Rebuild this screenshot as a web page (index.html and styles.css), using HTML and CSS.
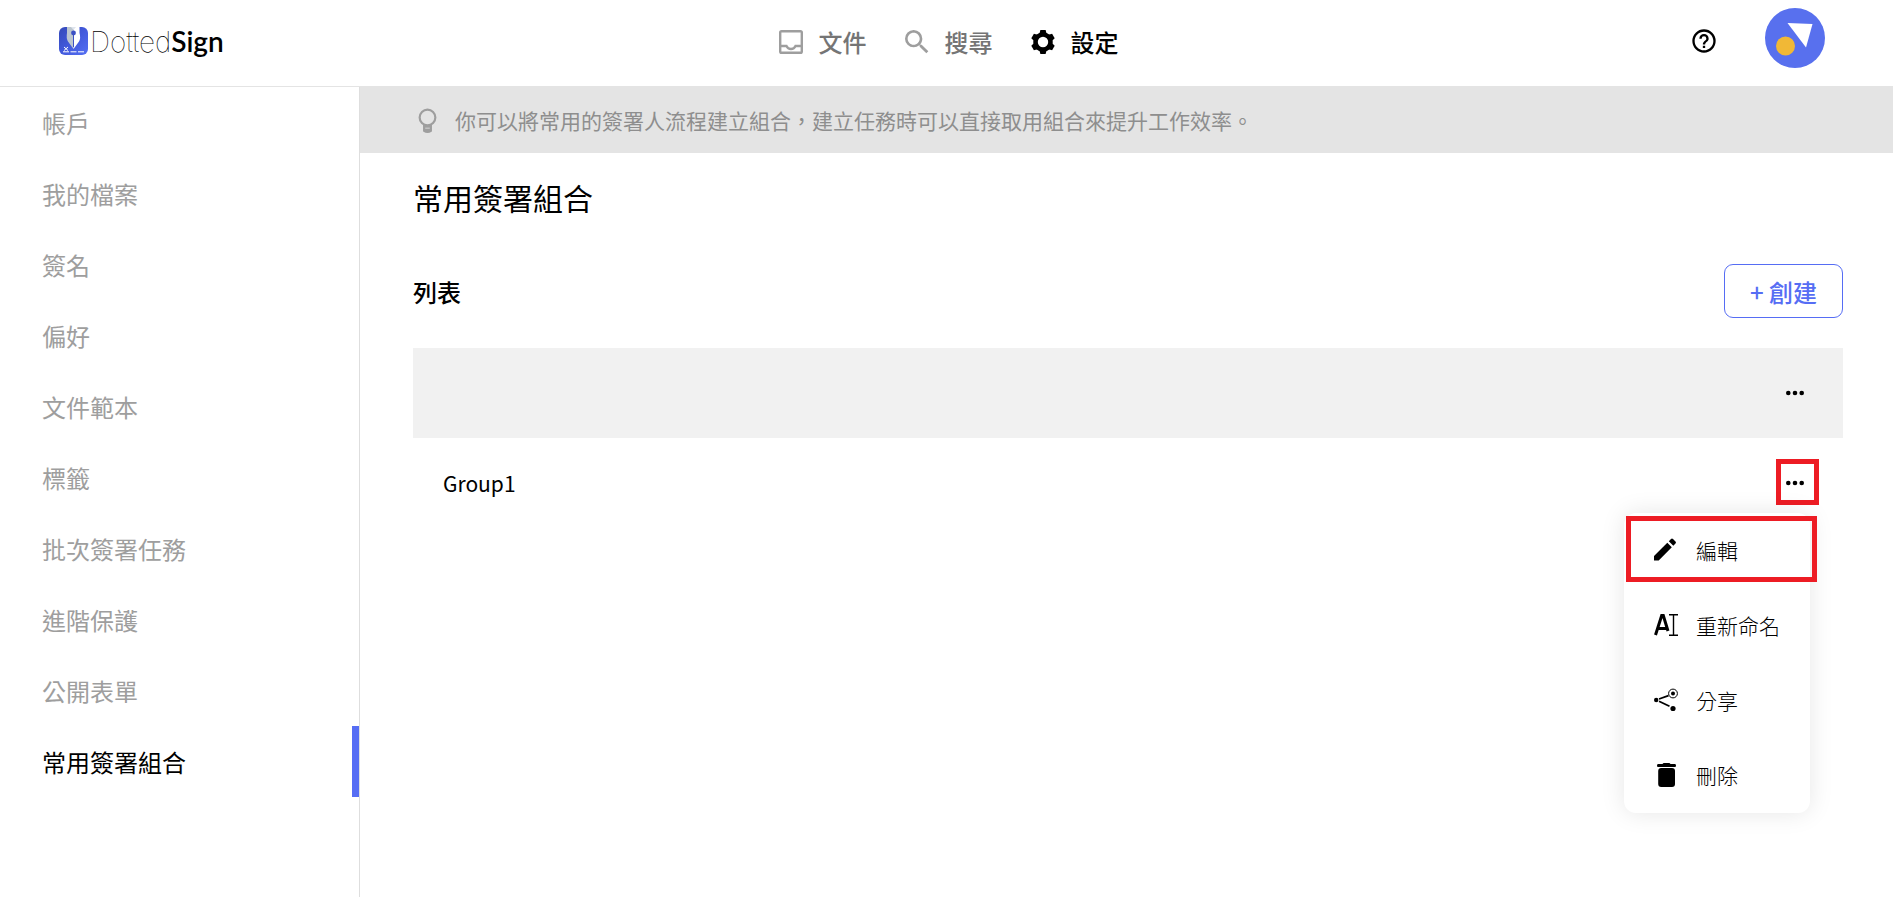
FILE: index.html
```html
<!DOCTYPE html>
<html lang="zh-Hant">
  <head>
    <meta charset="utf-8" />
    <meta name="viewport" content="width=device-width, initial-scale=1.0" />
    <title>常用簽署組合 - DottedSign</title>
    <link rel="stylesheet" href="styles.css">
  </head>
  <body>
    <header class="topbar">
      <a class="logo" href="#">
        <svg width="29" height="28" viewBox="0 0 29 28" aria-hidden="true">
          <defs>
            <linearGradient id="logo-bg" x1="0" y1="0" x2="1" y2="1">
              <stop offset="0" stop-color="#3449b8" />
              <stop offset="0.5" stop-color="#4259dc" />
              <stop offset="1" stop-color="#5570f4" />
            </linearGradient>
          </defs>
          <rect width="29" height="28" rx="6" fill="url(#logo-bg)" />
          <path d="M8 0h6.500v22L9 14.500Q7 11 8 6z" fill="#bcc6cf" />
          <path d="M14.500 22V0H20.500v6Q22 11 20 14.500z" fill="#fff" />
          <path d="M12 0h5l-2.500 3z" fill="#dfe5ee" />
          <path d="M14.500 6v14" stroke="#3b50c4" stroke-width="1" />
          <circle cx="14.500" cy="6" r="2.400" fill="#3b50c4" />
          <path d="M5 20l4 3.500M9 20l-4 3.500" stroke="#fff" stroke-width="1" />
          <path d="M4 24.800h6M11.500 24.800h6M19 24.800h6" stroke="#fff" stroke-width="1" />
        </svg>
        <span class="logo-text">Dotted<strong>Sign</strong></span>
      </a>
      <nav class="main-nav">
        <a href="#">
          <svg width="32" height="32" viewBox="0 0 24 24" fill="none" stroke="#9e9e9e" stroke-width="1.800" aria-hidden="true">
            <rect x="3.900" y="3.900" width="16.200" height="16.200" rx="1" />
            <path d="M4 15h4.600q1 2.200 3.400 2.200t3.400-2.200H20" />
          </svg>
          文件
        </a>
        <a href="#">
          <svg width="32" height="32" viewBox="0 0 24 24" fill="#9e9e9e" aria-hidden="true">
            <path d="M9.500 3A6.500 6.500 0 0 1 16 9.500c0 1.610-.590 3.090-1.560 4.230l.270.270h.790l5 5-1.500 1.500-5-5v-.790l-.270-.270A6.516 6.516 0 0 1 9.500 16a6.500 6.500 0 0 1 0-13m0 2C7 5 5 7 5 9.500S7 14 9.500 14 14 12 14 9.500 12 5 9.500 5z" />
          </svg>
          搜尋
        </a>
        <a class="active" href="#">
          <svg width="32" height="32" viewBox="-16 -16 32 32" aria-hidden="true">
            <circle r="7.500" fill="none" stroke="#000" stroke-width="4.600" />
            <path id="tooth" d="M-3.800-7.500L-2.600-12H2.600L3.800-7.500z" />
            <use href="#tooth" transform="rotate(60)" />
            <use href="#tooth" transform="rotate(120)" />
            <use href="#tooth" transform="rotate(180)" />
            <use href="#tooth" transform="rotate(240)" />
            <use href="#tooth" transform="rotate(300)" />
          </svg>
          設定
        </a>
      </nav>
      <div class="account">
        <button class="icon-button" type="button" aria-label="說明">
          <svg width="28" height="28" viewBox="0 0 24 24" aria-hidden="true">
            <path d="M11 18h2v-2h-2v2m1-16A10 10 0 0 0 2 12a10 10 0 0 0 10 10 10 10 0 0 0 10-10A10 10 0 0 0 12 2m0 18c-4.410 0-8-3.590-8-8s3.590-8 8-8 8 3.590 8 8-3.590 8-8 8m0-14a4 4 0 0 0-4 4h2a2 2 0 0 1 2-2 2 2 0 0 1 2 2c0 2-3 1.750-3 5h2c0-2.250 3-2.500 3-5a4 4 0 0 0-4-4z" />
          </svg>
        </button>
        <button class="icon-button" type="button" aria-label="個人帳戶">
          <svg width="60" height="60" viewBox="0 0 60 60" aria-hidden="true">
            <circle cx="30" cy="30" r="30" fill="#5870ee" />
            <path d="M22.500 15L47.500 16 41 39.500z" fill="#fff" />
            <circle cx="20.500" cy="38" r="9.500" fill="#f1b836" />
          </svg>
        </button>
      </div>
    </header>

    <div class="layout">
      <nav class="sidebar">
        <a href="#">帳戶</a>
        <a href="#">我的檔案</a>
        <a href="#">簽名</a>
        <a href="#">偏好</a>
        <a href="#">文件範本</a>
        <a href="#">標籤</a>
        <a href="#">批次簽署任務</a>
        <a href="#">進階保護</a>
        <a href="#">公開表單</a>
        <a class="active" href="#">常用簽署組合</a>
      </nav>

      <main>
        <p class="hint">
          <svg width="29" height="29" viewBox="0 0 24 24" fill="none" stroke="#9e9e9e" stroke-width="1.800" aria-hidden="true">
            <circle cx="12" cy="9.500" r="6.500" />
            <path d="M9.200 15v5.500q2.800 2 5.600 0V15M9 17h6M9 19.500h6" />
          </svg>
          你可以將常用的簽署人流程建立組合，建立任務時可以直接取用組合來提升工作效率。
        </p>
        <div class="content">
          <h1>常用簽署組合</h1>
          <div class="list-header">
            <h2>列表</h2>
            <button class="create" type="button">+ 創建</button>
          </div>
          <table class="groups">
            <thead>
              <tr>
                <th></th>
                <td class="actions">
                  <button class="icon-button" type="button" aria-label="更多">
                    <svg width="24" height="24" viewBox="0 0 24 24" aria-hidden="true">
                      <circle cx="5.300" cy="12" r="2.300" />
                      <circle cx="12" cy="12" r="2.300" />
                      <circle cx="18.700" cy="12" r="2.300" />
                    </svg>
                  </button>
                </td>
              </tr>
            </thead>
            <tbody>
              <tr>
                <td>Group1</td>
                <td class="actions">
                  <button class="icon-button marked" type="button" aria-label="更多">
                    <svg width="24" height="24" viewBox="0 0 24 24" aria-hidden="true">
                      <circle cx="5.300" cy="12" r="2.300" />
                      <circle cx="12" cy="12" r="2.300" />
                      <circle cx="18.700" cy="12" r="2.300" />
                    </svg>
                  </button>
                  <div class="menu">
                    <button class="marked" type="button">
                      <svg width="24" height="24" viewBox="0 0 24 24" aria-hidden="true">
                        <path d="M0 18L13.300 4.700l4.500 4.500L4.700 22.400H0zM14.800 3.200L17 1q1-1 2 0l2.500 2.500q1 1 0 2l-2.200 2.200z" />
                      </svg>
                      編輯
                    </button>
                    <button type="button">
                      <svg width="24" height="24" viewBox="0 0 24 24" aria-hidden="true">
                        <path d="M1.500 22L7.700 2.500h1.600L14 18M4 15.500h8.500" fill="none" stroke="#000" stroke-width="3" />
                        <path d="M15 1.700h9M15 22.300h9M19.500 2v20" fill="none" stroke="#000" stroke-width="1.400" />
                      </svg>
                      重新命名
                    </button>
                    <button type="button">
                      <svg width="24" height="24" viewBox="0 0 24 24" aria-hidden="true">
                        <circle cx="2.200" cy="12" r="2.200" />
                        <circle cx="19" cy="5.500" r="2" />
                        <circle cx="19" cy="5.500" r="4.400" fill="none" stroke="#000" stroke-width="1" />
                        <circle cx="19" cy="20.500" r="2.600" />
                        <path d="M5 11l9.500-3.400M5 13.300l10.500 5" fill="none" stroke="#000" stroke-width="1.800" />
                      </svg>
                      分享
                    </button>
                    <button type="button">
                      <svg width="24" height="24" viewBox="0 0 24 24" aria-hidden="true">
                        <path d="M4 1h4.500q.5-1 1.500-1h5q1 0 1.500 1H21q1 0 1 1.500T21 4H4Q3 4 3 2.500T4 1z" />
                        <rect x="4.200" y="5" width="16.800" height="19" rx="3" />
                      </svg>
                      刪除
                    </button>
                  </div>
                </td>
              </tr>
            </tbody>
          </table>
        </div>
      </main>
    </div>
  </body>
</html>
```
FILE: styles.css
```css
* {
  box-sizing: border-box;
}
body {
  display: flex;
  flex-direction: column;
  min-height: 100vh;
  margin: 0;
  background: #fff;
  color: #000;
  font-family: "Noto Sans CJK TC", "Noto Sans", sans-serif;
  font-size: 21px;
}
a {
  color: inherit;
  text-decoration: none;
}
h1,
h2,
p {
  margin: 0;
}
button {
  font: inherit;
  color: inherit;
  background: none;
  border: 0;
  padding: 0;
  cursor: pointer;
}
svg {
  display: block;
  flex: none;
}

.topbar {
  display: grid;
  grid-template-columns: 1fr auto 1fr;
  align-items: center;
  padding: 8px 59px 18px;
  border-bottom: 1px solid #e4e4e4;
}
.logo {
  display: flex;
  align-items: center;
  gap: 2px;
  padding-top: 6px;
}
.logo-text {
  font-family: Inter, "Open Sans", sans-serif;
  font-size: 28px;
  font-weight: 100;
  line-height: 28px;
}
.logo-text strong {
  font-family: Lato, sans-serif;
  font-weight: 600;
}
.main-nav {
  display: flex;
  gap: 34px;
  padding-top: 7px;
}
.main-nav a {
  display: flex;
  align-items: center;
  gap: 12px;
  color: #757575;
  font-size: 24px;
  font-weight: 500;
}
.main-nav .active {
  color: #000;
}
.account {
  display: flex;
  align-items: center;
  justify-content: flex-end;
  gap: 47px;
  padding-right: 9px;
}
.account .icon-button:first-child {
  padding-top: 6px;
}

.layout {
  display: flex;
  flex: 1;
}
.sidebar {
  width: 360px;
  flex: none;
  border-right: 1px solid #dedede;
}
.sidebar a {
  display: block;
  padding-left: 42px;
  color: #9e9e9e;
  font-size: 24px;
  line-height: 71px;
}
.sidebar .active {
  color: #000;
  border-right: 7px solid #566df4;
}

main {
  flex: 1;
}
.hint {
  display: flex;
  align-items: center;
  gap: 13px;
  min-height: 66px;
  padding: 0 53px;
  background: #e4e4e4;
  color: #8e8e8e;
}
.content {
  padding: 22px 50px 24px 53px;
}
h1 {
  font-size: 30px;
  font-weight: 400;
  line-height: 44px;
}
.list-header {
  display: flex;
  align-items: center;
  justify-content: space-between;
  margin: 45px 0 30px;
}
h2 {
  font-size: 24px;
  font-weight: 500;
}
.create {
  height: 54px;
  padding: 0 25px;
  border: 1px solid #566df4;
  border-radius: 9px;
  color: #566df4;
  font-size: 24px;
  font-weight: 500;
}

.groups {
  width: 100%;
  border-collapse: collapse;
}
.groups tr {
  height: 90px;
}
.groups thead {
  background: #f1f1f1;
}
.groups th,
.groups td {
  padding: 0 0 0 30px;
}
.groups .actions {
  position: relative;
  width: 90px;
  padding: 0 36px 0 30px;
}
.icon-button {
  display: block;
}

.menu {
  position: absolute;
  top: 75px;
  right: 33px;
  width: 186px;
  border-radius: 12px;
  background: #fff;
  box-shadow: 0 0 24px rgba(0, 0, 0, 0.1);
}
.menu button {
  display: flex;
  align-items: center;
  gap: 18px;
  width: 100%;
  height: 75px;
  padding: 0 0 2px 30px;
  font-weight: 300;
  white-space: nowrap;
}

/* red call-out frames */
.marked {
  position: relative;
}
.marked::after {
  content: "";
  position: absolute;
  inset: -12px -12px -10px -7px;
  border: 5px solid #ed1c24;
}
.menu .marked::after {
  inset: 3px -7px 6px 2px;
}
```
